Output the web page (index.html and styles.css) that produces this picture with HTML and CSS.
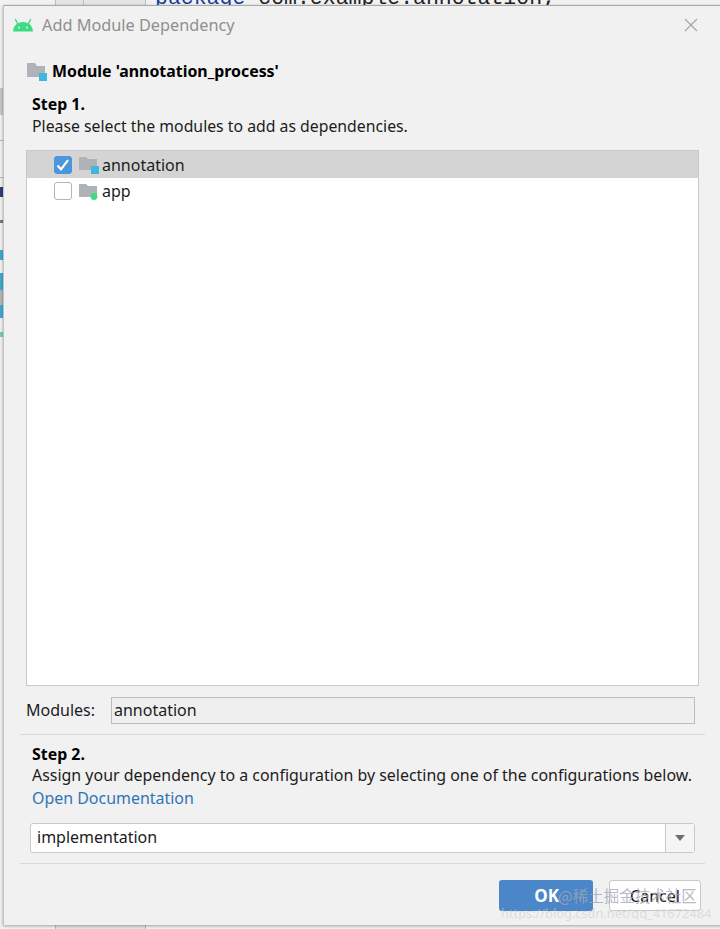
FILE: index.html
```html
<!DOCTYPE html>
<html lang="en">
<head>
  <meta charset="UTF-8" />
  <title>Add Module Dependency</title>
  <link rel="stylesheet" href="styles.css">
</head>
<body>
  <div class="ide">
    <div class="ide-gutter"></div>
    <div class="ide-tab"></div>
    <div class="ide-code"><span class="kw">package</span> com.example.annotation;</div>
    <div class="ide-strip">
      <span class="strip-a"></span>
      <span class="strip-line1"></span>
      <span class="strip-line2"></span>
      <span class="strip-b"></span>
      <span class="strip-dot"></span>
      <span class="strip-c"></span>
      <span class="strip-d"></span>
      <span class="strip-e"></span>
      <span class="strip-f"></span>
      <span class="strip-g"></span>
    </div>
  </div>

  <div class="dialog">
    <div class="title-bar">
      <svg class="android" width="22" height="14" viewBox="0 0 22 14">
        <path d="M1 13.500C1.500 7.500 5.500 4 11 4s9.500 3.500 10 9.500z" fill="#3ddc84"/>
        <path d="M5.500 5.500 3.500 1.500M16.500 5.500l2-4" stroke="#3ddc84" stroke-width="1.400" stroke-linecap="round"/>
        <circle cx="7" cy="9.500" r="1" fill="#f0f0f0"/>
        <circle cx="15" cy="9.500" r="1" fill="#f0f0f0"/>
      </svg>
      <span class="title-text">Add Module Dependency</span>
      <svg class="close" width="14" height="14" viewBox="0 0 14 14">
        <path d="M1 1l12 12M13 1 1 13" stroke="#a8a8a8" stroke-width="1.300"/>
      </svg>
    </div>

    <div class="module-head">
      <span class="folder">
        <svg width="21" height="19" viewBox="0 0 21 19">
          <path d="M0 1h8l2 3h8v11H0z" fill="#afb3b8"/>
          <rect x="12" y="11" width="8" height="8" fill="#40b6e0"/>
        </svg>
      </span>
      <strong>Module 'annotation_process'</strong>
    </div>

    <div class="step step-one">
      <h4>Step 1.</h4>
      <p>Please select the modules to add as dependencies.</p>
    </div>

    <div class="module-list">
      <div class="row row-selected">
        <span class="check check-on">
          <svg width="18" height="18" viewBox="0 0 18 18">
            <path d="M3.500 9.500 7 13.300 14 4.200" fill="none" stroke="#fff" stroke-width="2.200"/>
          </svg>
        </span>
        <svg class="row-icon" width="20" height="19" viewBox="0 0 20 19">
          <path d="M0 2h7l2 2h9v11H0z" fill="#afb3b8"/>
          <rect x="12" y="11" width="8" height="8" fill="#40b6e0"/>
        </svg>
        <span>annotation</span>
      </div>
      <div class="row">
        <span class="check"></span>
        <svg class="row-icon" width="20" height="19" viewBox="0 0 20 19">
          <path d="M0 2h7l2 2h9v11H0z" fill="#afb3b8"/>
          <circle cx="15" cy="14.500" r="3.400" fill="#3ddc84"/>
        </svg>
        <span>app</span>
      </div>
    </div>

    <div class="modules-field">
      <label>Modules:</label>
      <div class="field-box">annotation</div>
    </div>

    <div class="divider"></div>

    <div class="step step-two">
      <h4>Step 2.</h4>
      <p>Assign your dependency to a configuration by selecting one of the configurations below.</p>
      <a href="#">Open Documentation</a>
    </div>

    <div class="combo">
      <div class="combo-value">implementation</div>
      <div class="combo-arrow"><span class="arrow"></span></div>
    </div>

    <div class="divider divider-low"></div>

    <div class="buttons">
      <button class="btn btn-ok">OK</button>
      <button class="btn btn-cancel">Cancel</button>
    </div>
  </div>

  <div class="mark-cn">@稀土掘金技术社区</div>
  <div class="mark-url">https://blog.csdn.net/qq_41672484</div>
</body>
</html>
```

FILE: styles.css
```css
html, body {
  margin: 0;
  padding: 0;
  height: 100%;
  overflow: hidden;
}

body {
  position: relative;
  width: 720px;
  height: 929px;
  background-color: #f2f2f2;
  color: #1c1c1c;
  font-family: 'Noto Sans', 'Open Sans', sans-serif;
  font-size: 15.8px;
}

/* the editor behind the dialog */
.ide {
  position: absolute;
  inset: 0;
  overflow: hidden;
}

.ide-gutter {
  position: absolute;
  left: 55px;
  top: 0;
  bottom: 0;
  width: 89px;
  background-color: #e4e4e4;
  border-left: 1px solid #bdbdbd;
  border-right: 1px solid #bdbdbd;
}

.ide-tab {
  position: absolute;
  left: 83px;
  top: 0;
  width: 1px;
  height: 6px;
  background-color: #bdbdbd;
}

.ide-code {
  position: absolute;
  left: 155px;
  top: -16px;
  font-family: 'Liberation Mono', monospace;
  font-size: 21.5px;
  line-height: 28px;
  color: #222;
  white-space: nowrap;
}

.kw {
  color: #1a3d9c;
}

.ide-strip {
  position: absolute;
  left: 0;
  top: 0;
  bottom: 0;
  width: 3px;
  background-color: #f2f2f2;
}

.ide-strip span {
  position: absolute;
  left: 0;
  width: 3px;
}

.strip-a { top: 88px; height: 27px; background-color: #c8c8c8; }
.strip-line1 { top: 140px; height: 1px; background-color: #b8b8b8; }
.strip-line2 { top: 177px; height: 1px; background-color: #b8b8b8; }
.strip-b { top: 187px; height: 10px; background-color: #2f3d7a; }
.strip-dot { top: 220px; height: 3px; background-color: #777; }
.strip-c { top: 250px; height: 10px; background-color: #3fa9d6; }
.strip-d { top: 273px; height: 17px; background-color: #3fa9d6; }
.strip-e { top: 290px; height: 15px; background-color: #b5b5b5; }
.strip-f { top: 305px; height: 13px; background-color: #3fa9d6; }
.strip-g { top: 332px; height: 5px; background-color: #6fd6a8; }

/* dialog */
.dialog {
  position: absolute;
  left: 3px;
  top: 5px;
  width: 730px;
  height: 920px;
  background-color: #f1f1f1;
  border-top: 1px solid #a9a9a9;
  border-left: 1px solid #c4c4c4;
  box-shadow: 0 1px 3px rgba(0, 0, 0, 0.35);
  box-sizing: border-box;
}

.title-bar {
  display: flex;
  align-items: center;
  height: 38px;
  padding-left: 8px;
}

.android {
  margin-right: 8px;
}

.title-text {
  color: #8f8f8f;
  font-size: 16.3px;
}

.close {
  position: absolute;
  left: 680px;
  top: 12px;
}

.module-head {
  display: flex;
  align-items: center;
  height: 24px;
  padding-left: 23px;
  margin-top: 15px;
  color: #000;
  font-size: 15.9px;
}

.folder {
  display: flex;
  width: 25px;
}

.step h4 {
  margin: 0;
  font-size: 15.9px;
  line-height: 22px;
  font-weight: 700;
  color: #000;
}

.step p {
  margin: 0;
  line-height: 22px;
}

.step-one {
  padding: 10px 0 0 28px;
}

.module-list {
  width: 673px;
  height: 536px;
  margin: 13px 0 0 22px;
  background-color: #fff;
  border: 1px solid #c9c9c9;
  box-sizing: border-box;
}

.row {
  display: flex;
  align-items: center;
  height: 26px;
  padding-left: 27px;
  font-size: 16px;
}

.row-selected {
  height: 27px;
  background-color: #d4d4d4;
}

.check {
  width: 18px;
  height: 18px;
  margin-right: 7px;
  background-color: #fff;
  border: 1px solid #b5b5b5;
  border-radius: 3px;
  box-sizing: border-box;
}

.check-on {
  background-color: #4b96dc;
  border-color: #4b96dc;
}

.check-on svg {
  display: block;
  margin: -1px;
}

.row-icon {
  margin-right: 3px;
}

.modules-field {
  display: flex;
  align-items: center;
  height: 26px;
  margin: 11px 0 0 22px;
}

.modules-field label {
  width: 85px;
  flex: none;
  font-size: 16px;
}

.field-box {
  width: 584px;
  height: 27px;
  line-height: 25px;
  padding-left: 2px;
  background-color: #efefef;
  border: 1px solid #bdbdbd;
  box-sizing: border-box;
  font-size: 16px;
}

.divider {
  width: 685px;
  height: 1px;
  margin: 11px 0 0 16px;
  background-color: #d9d9d9;
}

.step-two {
  padding: 8px 0 0 28px;
}

.step-two p {
  margin-top: -1px;
  font-size: 15.95px;
}

.step-two a {
  display: block;
  line-height: 24px;
  font-size: 15.95px;
  color: #2f75b5;
  text-decoration: none;
}

.combo {
  display: flex;
  width: 665px;
  height: 30px;
  margin: 13px 0 0 26px;
  background-color: #fff;
  border: 1px solid #c9c9c9;
  border-radius: 3px;
  box-sizing: border-box;
}

.combo-value {
  flex: 1;
  padding-left: 6px;
  line-height: 27px;
  font-size: 16px;
}

.combo-arrow {
  display: flex;
  align-items: center;
  justify-content: center;
  width: 28px;
  background-color: #f5f5f5;
  border-left: 1px solid #c9c9c9;
}

.arrow {
  width: 0;
  height: 0;
  border-left: 5px solid transparent;
  border-right: 5px solid transparent;
  border-top: 6px solid #6e6e6e;
}

.divider-low {
  margin-top: 10px;
}

.buttons {
  display: flex;
  gap: 16px;
  margin: 16px 0 0 495px;
}

.btn {
  height: 31px;
  padding: 0;
  border-radius: 3px;
  font-family: inherit;
  font-size: 16px;
  box-sizing: border-box;
}

.btn-ok {
  width: 94px;
  background-color: #4a86c8;
  border: none;
  color: #fff;
  font-size: 17px;
  font-weight: 700;
  text-align: right;
  padding-right: 34px;
}

.btn-cancel {
  width: 92px;
  background-color: #fff;
  border: 1px solid #c9c9c9;
  color: #111;
}

/* image host watermark */
.mark-cn {
  position: absolute;
  left: 558px;
  top: 884px;
  font-family: 'Noto Sans CJK SC', sans-serif;
  font-size: 15.5px;
  line-height: 22px;
  color: rgba(160, 168, 180, 0.8);
  white-space: nowrap;
}

.mark-url {
  position: absolute;
  left: 501px;
  top: 905px;
  font-size: 12.8px;
  line-height: 16px;
  color: rgba(205, 205, 205, 0.6);
  white-space: nowrap;
}
```
